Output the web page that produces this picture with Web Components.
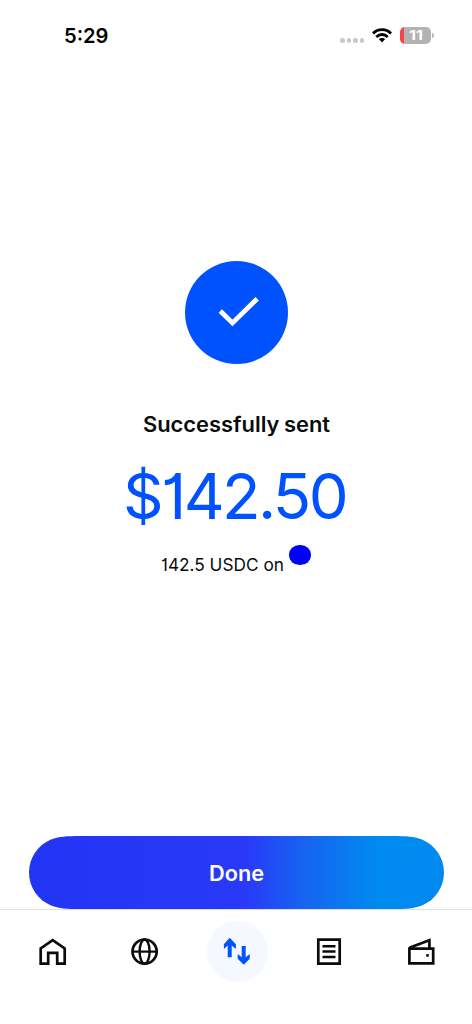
<!DOCTYPE html>
<html lang="en">
<head>
<meta charset="utf-8">
<title>Successfully sent</title>
<style>
html,body{margin:0;height:100%;background:#fff}
body{font-family:Inter,"Liberation Sans",sans-serif;color:#0a0b0d}
</style>
</head>
<body>
<wallet-screen></wallet-screen>
<script>
const define = (name, html, setup) => customElements.define(name, class extends HTMLElement {
  connectedCallback() {
    if (this.shadowRoot) return;
    const t = document.createElement('template');
    t.innerHTML = html;
    this.attachShadow({mode: 'open'}).append(t.content.cloneNode(true));
    if (setup) setup(this);
  }
});

/* A single line of text set to a given width: w, h, baseline, size, weight */
define('fit-text', `<style>:host{display:block}svg{display:block;overflow:visible}text{font-family:Inter,"Liberation Sans",sans-serif;fill:currentColor;font-feature-settings:"cv01" var(--alt,1)}</style><svg><text></text></svg>`, el => {
  const svg = el.shadowRoot.querySelector('svg'), t = svg.firstChild, a = n => el.getAttribute(n);
  svg.setAttribute('width', a('w')); svg.setAttribute('height', a('h'));
  t.setAttribute('y', a('baseline')); t.setAttribute('font-size', a('size'));
  t.setAttribute('font-weight', a('weight') || 400);
  t.setAttribute('textLength', a('w')); t.setAttribute('lengthAdjust', 'spacingAndGlyphs');
  t.textContent = a('text');
});

define('status-bar', `<style>
:host{display:flex;box-sizing:border-box;height:70px;padding:20px 38px 0 64px;justify-content:space-between;color:#000;--alt:0}
.r{display:flex;align-items:center;height:30px}
.dots{display:flex;gap:2px;margin:11px 8px 0 0}.dots i{width:4.5px;height:4.5px;border-radius:50%;background:#c9c9c9}
.bat{width:31px;height:17px;border-radius:5px;background:linear-gradient(90deg,#f4434b 4px,#b3b3b3 4px);color:#fff;margin-left:8px;display:flex;justify-content:center}
.cap{width:2px;height:5px;margin-left:1px;border-radius:0 2px 2px 0;background:#b9b9b9}
</style>
<fit-text text="5:29" w="44.5" h="30" baseline="22.5" size="20" weight="600"></fit-text>
<div class="r"><div class="dots"><i></i><i></i><i></i><i></i></div>
<svg width="20" height="15" viewBox="0 0 20 15"><g fill="none" stroke="#000" stroke-width="2.8"><path d="M1 5.4C6 .4 14 .4 19 5.4"/><path d="M4.3 8.9c3.3-3.2 8.1-3.2 11.4 0"/></g><path d="M6.8 11.1c1.9-1.6 4.5-1.6 6.4 0L10 14.6z"/></svg>
<div class="bat"><fit-text text="11" w="14" h="17" baseline="13.2" size="13.5" weight="700"></fit-text></div><i class="cap"></i></div>`);

define('success-badge', `<style>:host{display:flex;width:103px;height:103px;border-radius:50%;background:#0052ff}</style>
<svg width="103" height="103"><path d="M35.3 50L47.5 62L72.2 37.8" fill="none" stroke="#fff" stroke-width="4.8"/></svg>`);

define('payment-result', `<style>
:host{display:flex;flex-direction:column;align-items:center;height:766px;padding-top:190.5px;box-sizing:border-box}
.title{margin:45.5px 0 0 0;word-spacing:-1px}.amount{color:#0052ff;letter-spacing:-2.6px;margin:21px 0 0 -3px}
.detail{display:flex;margin:15px 0 0 -1px}
.net{width:22px;height:20px;border-radius:48%;background:#00f;margin:0 0 0 5px}
</style>
<success-badge></success-badge>
<fit-text class="title" text="Successfully sent" w="187" h="30" baseline="22.5" size="21" weight="600"></fit-text>
<fit-text class="amount" text="$142.50" w="223" h="70" baseline="59" size="63.5"></fit-text>
<div class="detail"><fit-text text="142.5 USDC on" w="123" h="32" baseline="25.8" size="17.2"></fit-text><div class="net"></div></div>`);

define('primary-button', `<style>
:host{display:block;width:415px;height:73px;margin-left:29px}
button{all:unset;display:grid;width:415px;height:73px;place-items:center;color:#fff}
.bg{grid-area:1/1}fit-text{grid-area:1/1;z-index:1}
</style><button><svg class="bg" width="415" height="73"><defs><linearGradient id="g"><stop stop-color="#2234f4"/><stop offset=".52" stop-color="#2a39f8"/><stop offset=".66" stop-color="#1763f1"/><stop offset=".84" stop-color="#008aef"/></linearGradient></defs><path fill="url(#g)" d="M52 0H363C378 0 385 .5 393 3.5C406 9 415 21.5 415 36.5S406 64 393 69.5C385 72.5 378 73 363 73H52C37 73 30 72.5 22 69.5C9 64 0 51.5 0 36.5S9 9 22 3.5C30 .5 37 0 52 0Z"/></svg>
<fit-text text="Done" w="55" h="30" baseline="22.8" size="21.2" weight="600"></fit-text></button>`);

define('nav-item', `<style>:host{display:grid;place-items:center;width:61px;height:61px;border-radius:50%}:host([active]){background:#f5f8ff}</style><slot></slot>`);

define('tab-bar', `<style>
:host{display:flex;justify-content:space-between;box-sizing:border-box;height:115px;border-top:1px solid #dedfe2;padding:11px 20px 0 22px}
svg{display:block;fill:none;stroke:#0a0b0d;stroke-width:2.7}
</style>
<nav-item><svg width="28" height="28"><path d="M1.7 25.6V10.4L13.7 2.1L25.7 10.4V25.6H18.2V14.8H9.2V25.6Z"/></svg></nav-item>
<nav-item><svg width="28" height="28"><circle cx="13.6" cy="13.6" r="12.1"/><ellipse cx="13.6" cy="13.6" rx="5" ry="12.1" stroke-width="2.4"/><path d="M2 13.6H25.5" stroke-width="2.2"/></svg></nav-item>
<nav-item active><svg width="28" height="28" style="fill:#0052ff;stroke:none"><path d="M4.7 19.3V7.6L.9 10.9V6.3L6.7 -.3L12.9 6.3V10.9L8.7 7.6V19.3ZM18.7 8.1H22.7V19.2L26.7 16V20.8L20.7 26.7L14.7 20.8V16L18.7 19.2Z"/></svg></nav-item>
<nav-item><svg width="28" height="28"><path d="M3.3 1.6H24.7V25.6H3.3Z"/><path d="M7.5 8.2H20.5M7.5 13.6H20.5M7.5 19H20.5" stroke-width="2.5"/></svg></nav-item>
<nav-item><svg width="28" height="28"><path d="M1.4 10.7H25.2V25.4H1.4Z" stroke-width="2.7"/><path d="M1.4 9.7L21.4 2.3V10" stroke-width="2.7"/><path d="M18.2 17.4H20.8" stroke-width="2.6"/></svg></nav-item>`);

define('wallet-screen', `<style>:host{display:flex;flex-direction:column;width:472px;height:1024px;overflow:hidden}</style>
<status-bar></status-bar><payment-result></payment-result><primary-button></primary-button><tab-bar></tab-bar>`);
</script>
</body>
</html>
